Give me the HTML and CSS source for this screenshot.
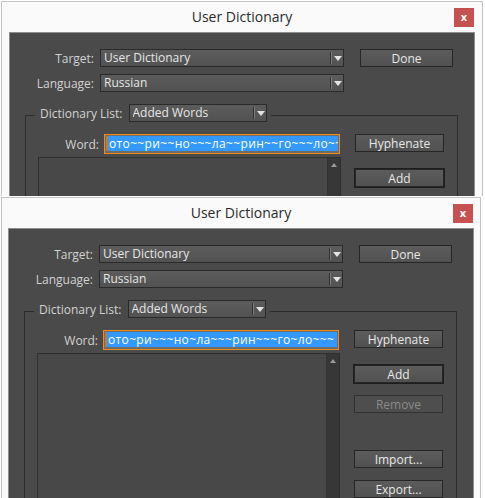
FILE: index.html
```html
<!DOCTYPE html>
<html>
<head>
<meta charset="utf-8">
<title>User Dictionary</title>
<link rel="stylesheet" href="styles.css">
</head>
<body>
<div class="win win1">
  <div class="titlebar">
    <span></span>
    <div class="title">User Dictionary</div>
    <div class="close">x</div>
  </div>
  <div class="panel">
    <div class="row">
      <label class="lbl">Target:</label>
      <div class="select wide"><span class="val">User Dictionary</span><span class="arrow"></span></div>
      <button class="btn done">Done</button>
    </div>
    <div class="row row2">
      <label class="lbl">Language:</label>
      <div class="select wide"><span class="val">Russian</span><span class="arrow"></span></div>
    </div>
    <fieldset class="group">
      <legend><div class="legend-in"><span class="glbl">Dictionary List:</span><div class="select small"><span class="val">Added Words</span><span class="arrow"></span></div></div></legend>
      <div class="gbody">
        <div class="left">
          <div class="wordrow">
            <label class="wlbl">Word:</label>
            <div class="input"><span class="caret"></span><span class="sel">ото~~ри~~но~~~ла~~рин~~го~~~ло~~~</span></div>
          </div>
          <div class="listbox"><div class="listarea"></div><div class="scroll"><span class="up"></span></div></div>
        </div>
        <div class="right">
          <button class="btn">Hyphenate</button>
          <button class="btn default">Add</button>
        </div>
      </div>
    </fieldset>
  </div>
</div>
<div class="win win2">
  <div class="titlebar">
    <span></span>
    <div class="title">User Dictionary</div>
    <div class="close">x</div>
  </div>
  <div class="panel">
    <div class="row">
      <label class="lbl">Target:</label>
      <div class="select wide"><span class="val">User Dictionary</span><span class="arrow"></span></div>
      <button class="btn done">Done</button>
    </div>
    <div class="row row2">
      <label class="lbl">Language:</label>
      <div class="select wide"><span class="val">Russian</span><span class="arrow"></span></div>
    </div>
    <fieldset class="group">
      <legend><div class="legend-in"><span class="glbl">Dictionary List:</span><div class="select small"><span class="val">Added Words</span><span class="arrow"></span></div></div></legend>
      <div class="gbody">
        <div class="left">
          <div class="wordrow">
            <label class="wlbl">Word:</label>
            <div class="input"><span class="caret"></span><span class="sel">ото~ри~~~но~ла~~~рин~~~го~ло~~~</span></div>
          </div>
          <div class="listbox"><div class="listarea"></div><div class="scroll"><span class="up"></span></div></div>
        </div>
        <div class="right">
          <button class="btn">Hyphenate</button>
          <button class="btn default">Add</button>
          <button class="btn disabled">Remove</button>
          <button class="btn import">Import...</button>
          <button class="btn export">Export...</button>
        </div>
      </div>
    </fieldset>
  </div>
</div>
</body>
</html>
```

FILE: styles.css
```css
* { box-sizing: border-box; }
html, body { margin: 0; padding: 0; }
body {
  width: 485px;
  height: 498px;
  overflow: hidden;
  background: #ffffff;
  font-family: "Open Sans", "Noto Sans", "Liberation Sans", sans-serif;
  font-size: 12px;
  color: #e2e2e2;
}
.win {
  background: #fafafa;
  border: 1px solid #c4c4c4;
  overflow: hidden;
}
.win1 {
  margin: 1px 0 0 1px;
  width: 482px;
  height: 195px;
  border-bottom: none;
  padding: 0 7px;
}
.win2 {
  margin: 1px 0 0 1px;
  width: 480px;
  height: 310px;
  padding: 0 6px;
}
.titlebar {
  height: 30px;
  display: grid;
  grid-template-columns: 1fr auto 1fr;
  align-items: start;
}
.title {
  font-size: 14px;
  line-height: 30px;
  color: #2a2a2a;
}
.close {
  justify-self: end;
  margin: 6px 1px 0 0;
  width: 20px;
  height: 19px;
  background: #c75050;
  color: #ffffff;
  font-weight: bold;
  font-size: 11px;
  line-height: 17px;
  text-align: center;
}
.panel {
  background: #4a4a4a;
  border: 1px solid #8e8e8e;
  border-bottom: none;
  height: 400px;
  padding-top: 16px;
}
.row {
  display: flex;
  align-items: center;
  height: 18px;
}
.row2 { margin-top: 7px; }
.lbl {
  width: 84px;
  text-align: right;
  margin-right: 6px;
  color: #d2d2d2;
}
.select {
  height: 18px;
  border: 1px solid #2a2a2a;
  background: linear-gradient(#5c5c5c, #525252);
  display: flex;
  align-items: center;
  padding-left: 3px;
  color: #e6e6e6;
}
.select.wide { width: 244px; }
.select.small { width: 138px; }
.select .val {
  flex: 1;
  line-height: 16px;
  white-space: nowrap;
  overflow: hidden;
}
.select .arrow {
  width: 12px;
  height: 12px;
  border-left: 1px solid #7a7a7a;
  box-shadow: -1px 0 0 #333333;
  position: relative;
}
.select .arrow::after {
  content: "";
  position: absolute;
  left: 2px;
  top: 4px;
  border-left: 4px solid transparent;
  border-right: 4px solid transparent;
  border-top: 5px solid #e4e4e4;
}
.btn {
  display: block;
  height: 18px;
  width: 89px;
  padding: 0;
  border: 1px solid #262626;
  background: linear-gradient(#5c5c5c, #515151);
  color: #e8e8e8;
  font-family: inherit;
  font-size: 12px;
  line-height: 15px;
  text-align: center;
}
.btn.done { width: 93px; margin-left: 16px; }
.btn.default {
  margin-top: 17px;
  box-shadow: 0 0 0 1px #1e1e1e;
}
.btn.disabled {
  margin-top: 12px;
  color: #8a8a8a;
  background: #4e4e4e;
  border-color: #303030;
}
.btn.import { margin-top: 37px; }
.btn.export { margin-top: 12px; }
.group {
  margin: 12px 0 0 15px;
  padding: 0;
  width: 433px;
  min-width: 0;
  height: 360px;
  border: 1px solid #2c2c2c;
}
.group legend {
  margin-left: 9px;
  padding: 0 4px 4px 5px;
}
.legend-in {
  display: flex;
  align-items: center;
  height: 18px;
}
.glbl {
  margin-right: 6px;
  color: #d2d2d2;
}
.gbody {
  display: flex;
  padding: 8px 0 0 12px;
}
.left { width: 303px; }
.wordrow {
  display: flex;
  align-items: center;
  height: 20px;
}
.wlbl {
  width: 61px;
  margin-right: 5px;
  text-align: right;
  color: #d2d2d2;
}
.input {
  width: 236px;
  height: 20px;
  border: 1px solid #f08c1c;
  background: #6c6c6c;
  padding: 1px 1px 2px 1px;
  display: flex;
}
.caret {
  width: 2px;
  background: #c77a2a;
}
.sel {
  flex: 1;
  background: #3399ff;
  color: #ffffff;
  white-space: nowrap;
  overflow: hidden;
  line-height: 15px;
  padding-left: 1px;
  letter-spacing: 0.35px;
}
.listbox {
  margin-top: 3px;
  height: 360px;
  border: 1px solid #2e2e2e;
  background: #484848;
  display: flex;
}
.listarea { flex: 1; }
.scroll {
  width: 13px;
  background: #373737;
  border-left: 1px solid #333333;
  display: flex;
  justify-content: center;
  padding-top: 5px;
}
.up {
  width: 0;
  height: 0;
  border-left: 3px solid transparent;
  border-right: 3px solid transparent;
  border-bottom: 4px solid #9a9a9a;
}
.right { margin-left: 14px; width: 89px; }
```
